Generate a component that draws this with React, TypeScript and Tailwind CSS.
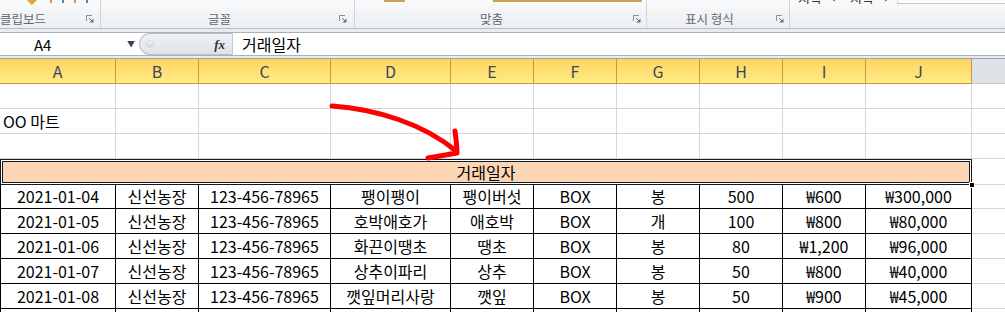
import React from 'react';

const cols = [116, 83, 132, 120, 83, 83, 83, 83, 83, 106];
const letters = ['A', 'B', 'C', 'D', 'E', 'F', 'G', 'H', 'I', 'J'];

const rows = [
  ['2021-01-04', '신선농장', '123-456-78965', '팽이팽이', '팽이버섯', 'BOX', '봉', '500', '₩600', '₩300,000'],
  ['2021-01-05', '신선농장', '123-456-78965', '호박애호가', '애호박', 'BOX', '개', '100', '₩800', '₩80,000'],
  ['2021-01-06', '신선농장', '123-456-78965', '화끈이땡초', '땡초', 'BOX', '봉', '80', '₩1,200', '₩96,000'],
  ['2021-01-07', '신선농장', '123-456-78965', '상추이파리', '상추', 'BOX', '봉', '50', '₩800', '₩40,000'],
  ['2021-01-08', '신선농장', '123-456-78965', '깻잎머리사랑', '깻잎', 'BOX', '봉', '50', '₩900', '₩45,000'],
  ['', '', '', '', '', '', '', '', '', ''],
];

const gridCols = 'grid grid-cols-[116px_83px_132px_120px_83px_83px_83px_83px_83px_106px_1fr]';

function Launcher() {
  return (
    <svg width="8" height="8" viewBox="0 0 8 8" className="shrink-0">
      <path d="M0.5 6V0.5H6" stroke="#8a9099" fill="none" />
      <path d="M3 3L6.5 6.5" stroke="#6b717a" />
      <path d="M7.5 3.5V7.5H3.5Z" fill="#6b717a" />
    </svg>
  );
}

function Ribbon() {
  return (
    <div className="flex h-[29px] border-b border-[#b7bec8] bg-gradient-to-b from-[#f9fafb] to-[#eceef1] text-[12.5px] text-[#606873]">
      {/* 클립보드 */}
      <div className="flex w-[101px] flex-col border-r border-[#cfd4da]">
        <div className="flex h-[10px] items-start gap-[14px] pl-[27px]">
          <div className="mt-[-5px] h-[8px] w-[9px] rotate-45 bg-[#d9a72c]" />
          <div className="flex gap-[10px]">
            <div className="h-[3px] w-[2px] bg-[#e69138]" />
            <div className="h-[3px] w-[2px] bg-[#4a86c8]" />
            <div className="h-[3px] w-[2px] bg-[#e69138]" />
            <div className="h-[3px] w-[2px] bg-[#4a86c8]" />
          </div>
        </div>
        <div className="flex flex-1 items-center justify-between pr-[6px]">
          <span className="leading-none">클립보드</span>
          <Launcher />
        </div>
      </div>
      {/* 글꼴 */}
      <div className="flex w-[254px] flex-col border-r border-[#cfd4da]">
        <div className="h-[10px]" />
        <div className="flex flex-1 items-center justify-between pl-[107px] pr-[7px]">
          <span className="leading-none">글꼴</span>
          <Launcher />
        </div>
      </div>
      {/* 맞춤 */}
      <div className="flex w-[292px] flex-col border-r border-[#cfd4da]">
        <div className="flex h-[10px] items-start">
          <div className="ml-[29px] h-[2px] w-[21px] bg-[#c9a24a]" />
          <div className="ml-[88px] h-[2px] w-[149px] bg-[#c9a24a]" />
        </div>
        <div className="flex flex-1 items-center justify-between pl-[125px] pr-[5px]">
          <span className="leading-none">맞춤</span>
          <Launcher />
        </div>
      </div>
      {/* 표시 형식 */}
      <div className="flex w-[143px] flex-col border-r border-[#cfd4da]">
        <div className="h-[10px]" />
        <div className="flex flex-1 items-center justify-between pl-[38px] pr-[5px]">
          <span className="leading-none">표시 형식</span>
          <Launcher />
        </div>
      </div>
      {/* 스타일 */}
      <div className="flex flex-1 flex-col">
        <div className="flex h-[4px] items-end overflow-hidden">
          <div className="flex items-end gap-[8px] pl-[8px] text-[13px] leading-[13px] text-[#333]">
            <span>지삭</span>
            <span className="text-[8px]">▼</span>
            <span className="ml-[4px]">지삭</span>
            <span className="text-[8px]">▼</span>
          </div>
          <div className="ml-[7px] h-[3px] flex-1 border-b border-l border-[#c3c8cf] bg-white" />
        </div>
      </div>
    </div>
  );
}

function FormulaBar() {
  return (
    <div className="bg-[#e8ebef]">
      <div className="h-[3px]" />
      <div className="flex h-[24px] items-stretch border-y border-[#a9b1bb] bg-white">
        <div className="flex w-[139px] items-center justify-between pl-[34px] pr-[4px]">
          <span className="text-[15px] leading-none text-black">A4</span>
          <span className="text-[8px] text-[#444]">▼</span>
        </div>
        <div className="flex w-[93px] items-center justify-between rounded-l-full border border-r-0 border-[#b9c0c8] bg-gradient-to-b from-[#eef0f3] to-[#dfe3e8] pl-[6px] pr-[7px]">
          <div className="h-[8px] w-[8px] rounded-full border border-[#d5d9de] bg-gradient-to-b from-[#fafafa] to-[#cfd3d8]" />
          <span className="font-['Liberation_Serif',serif] text-[13px] font-bold italic leading-none text-[#333]">fx</span>
        </div>
        <div className="flex flex-1 items-center border-l border-[#c4cad1] pl-[9px] text-[16px] text-black">
          거래일자
        </div>
      </div>
      <div className="h-[3px] border-b border-[#9aa3ad]" />
    </div>
  );
}

function HeaderRow() {
  return (
    <div className={`${gridCols} h-[25px]`}>
      {letters.map((l) => (
        <div
          key={l}
          className="flex items-center justify-center border-r border-b border-[#c8993a] bg-gradient-to-b from-[#fdd45f] to-[#ffeb86] text-[16px] text-[#3b4757]"
        >
          {l}
        </div>
      ))}
      <div className="border-b border-[#c5cad1] bg-[#dfe3e8]" />
    </div>
  );
}

function EmptyRow({ children }: { children?: React.ReactNode }) {
  return (
    <div className={`${gridCols} h-[25px]`}>
      {cols.map((_, i) => (
        <div key={i} className="flex items-center border-r border-b border-[#d6d6d6] text-[16px] text-black">
          {i === 0 ? children : null}
        </div>
      ))}
      <div className="border-b border-[#d6d6d6]" />
    </div>
  );
}

function MergedRow() {
  return (
    <div className={`${gridCols} h-[25px]`}>
      <div className="relative col-span-10 flex items-center justify-center border border-[#0e1a24] bg-[#fcd5b4] text-[16px] text-black shadow-[inset_0_0_0_1px_#fff,inset_0_0_0_2px_#0e1a24]">
        거래일자
        <div className="absolute right-[-4px] bottom-[-4px] h-[6px] w-[6px] border border-white bg-black" />
      </div>
      <div className="border-b border-[#d6d6d6]" />
    </div>
  );
}

function DataRow({ cells }: { cells: string[] }) {
  return (
    <div className={`${gridCols} h-[25px]`}>
      {cells.map((c, i) => (
        <div
          key={i}
          className={`flex items-center justify-center whitespace-nowrap border-r border-b border-black text-[16px] text-black ${i === 0 ? 'border-l' : ''}`}
        >
          {c}
        </div>
      ))}
      <div className="border-b border-[#d6d6d6]" />
    </div>
  );
}

export default function App() {
  return (
    <div className="relative h-[312px] w-[1005px] overflow-hidden bg-white font-['Noto_Sans_CJK_KR','Noto_Sans',sans-serif]">
      <Ribbon />
      <FormulaBar />
      <div className="relative">
        <HeaderRow />
        <EmptyRow />
        <EmptyRow>
          <span className="pl-[3px]">OO 마트</span>
        </EmptyRow>
        <EmptyRow />
        <MergedRow />
        {rows.map((r, i) => (
          <DataRow key={i} cells={r} />
        ))}
      </div>
      {/* red hand-drawn arrow */}
      <svg className="pointer-events-none absolute inset-0" width="1005" height="312">
        <g stroke="#ff0000" strokeWidth="5" fill="none" strokeLinecap="round" strokeLinejoin="round">
          <path d="M332 106 C 376 109, 424 124, 456 151" />
          <path d="M455 131 C 456 139, 457 146, 457 153 L 428 158" />
        </g>
      </svg>
    </div>
  );
}
